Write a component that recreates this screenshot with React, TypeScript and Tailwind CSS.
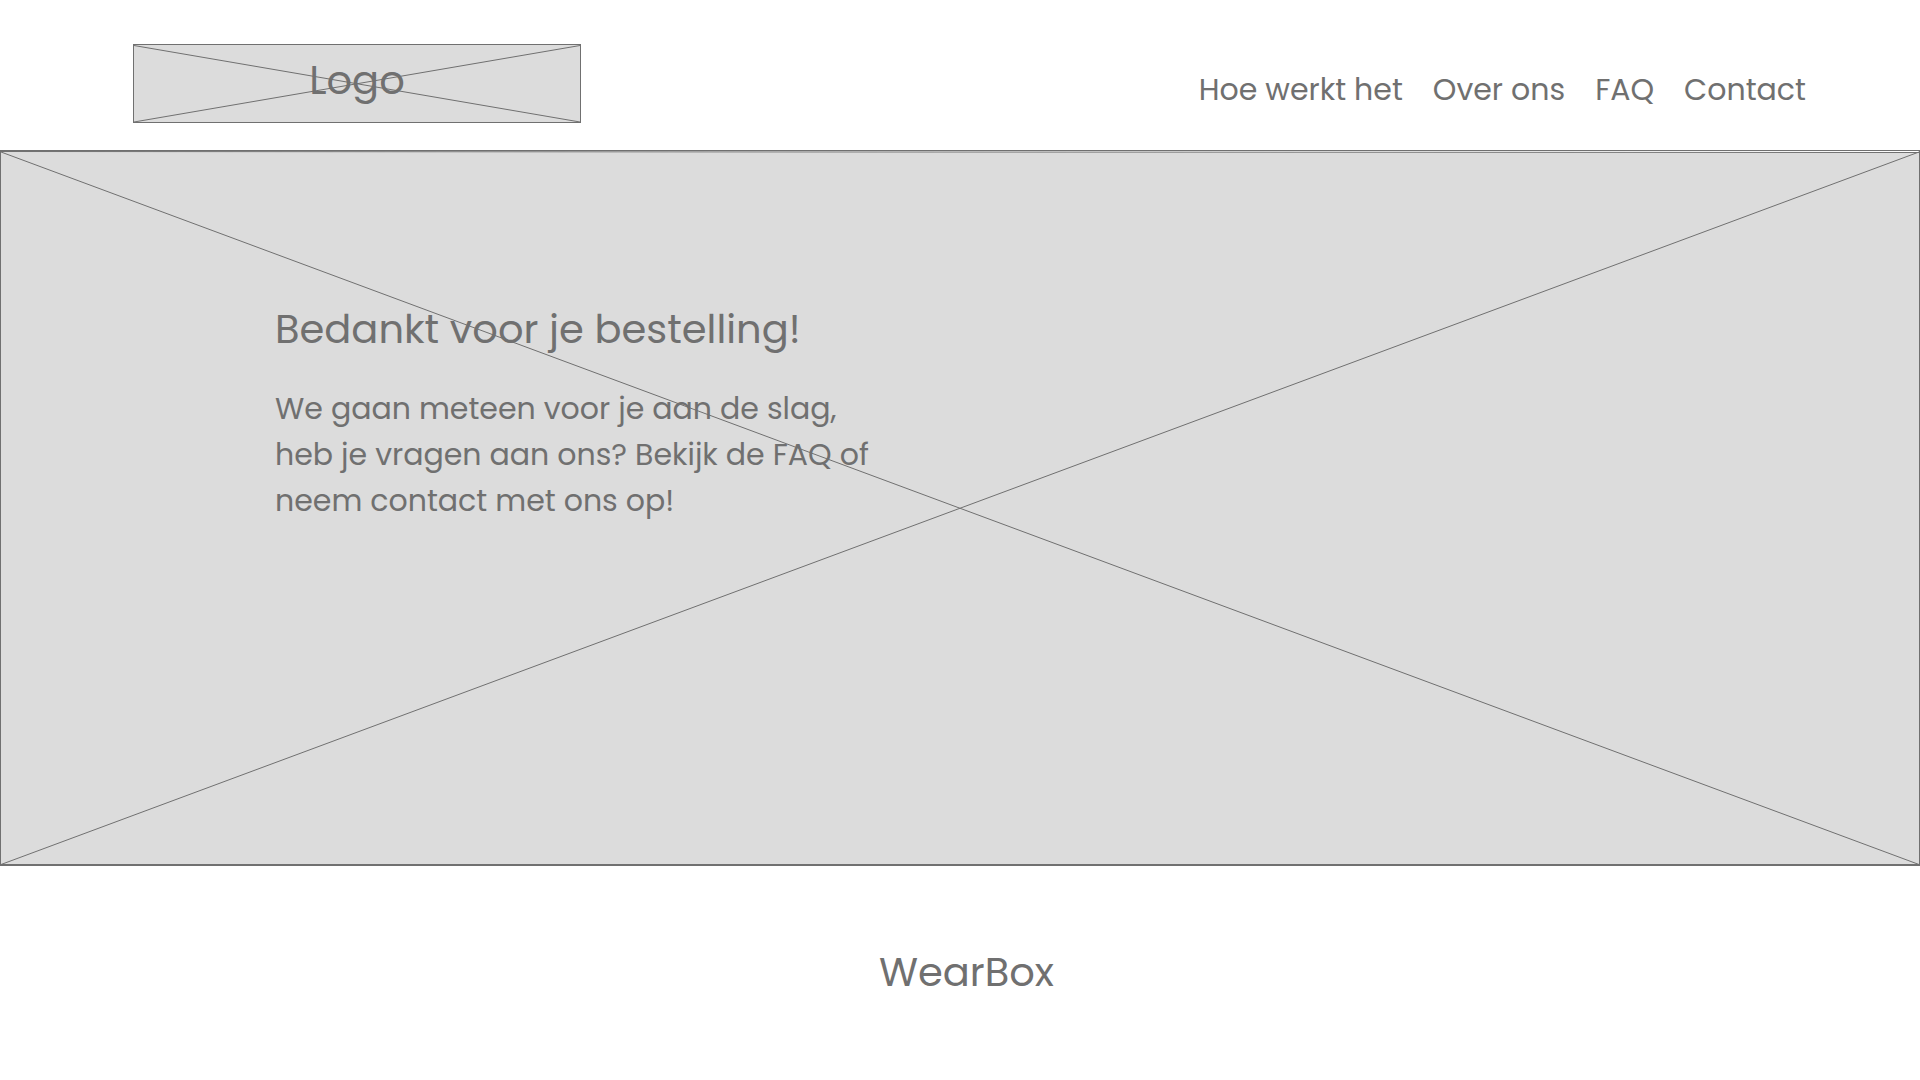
const links = ['Hoe werkt het', 'Over ons', 'FAQ', 'Contact'];

function LogoCross() {
  return (
    <svg className="absolute inset-0 h-full w-full" preserveAspectRatio="none" viewBox="0 0 446 77" aria-hidden="true">
      <path d="M0 .5L446 77M0 77L446 .5" fill="none" stroke="#707070" strokeWidth="1" vectorEffect="non-scaling-stroke" />
    </svg>
  );
}

// The hero's top edge slopes down by one pixel towards the right.
function HeroCross() {
  return (
    <svg className="absolute inset-0 h-full w-full" preserveAspectRatio="none" viewBox="0 0 1918 713" aria-hidden="true">
      <path d="M0 0H1918V1.5L0 .5Z" fill="#fff" />
      <path d="M0 .5L1918 1.5M0 1L1918 713.5M0 713.5L1918 1" fill="none" stroke="#707070" strokeWidth="1" vectorEffect="non-scaling-stroke" />
    </svg>
  );
}

export default function App() {
  return (
    <div className="min-h-screen bg-white font-['Poppins','Open_Sans',sans-serif] text-[#707070]">
      <header className="flex min-h-[151px] items-start justify-between border-b border-[#707070] pr-[114px] pl-[133px]">
        <a href="#" className="relative mt-11 flex h-[79px] w-[448px] justify-center border border-[#707070] bg-[#dcdcdc] text-[40px] leading-[70px]">
          <LogoCross />
          <span className="relative">Logo</span>
        </a>
        <nav className="mt-[67px] flex gap-[30px] text-[30px] leading-[46px]">
          {links.map((l) => (
            <a key={l} href="#">{l}</a>
          ))}
        </nav>
      </header>
      <main className="relative min-h-[713px] border-x border-[#707070] bg-[#dcdcdc] pt-[148px] pl-[274px]">
        <HeroCross />
        <h1 className="relative text-[40px] leading-[60px]">Bedankt voor je bestelling!</h1>
        <p className="relative mt-[27px] text-[30px] leading-[46px]">
          We gaan meteen voor je aan de slag,<br />
          heb je vragen aan ons? Bekijk de FAQ of<br />
          neem contact met ons op!
        </p>
      </main>
      <footer className="border-t-2 border-[#707070] pt-[76px] pl-[13px] text-center text-[40px] leading-[60px]">WearBox</footer>
    </div>
  );
}
